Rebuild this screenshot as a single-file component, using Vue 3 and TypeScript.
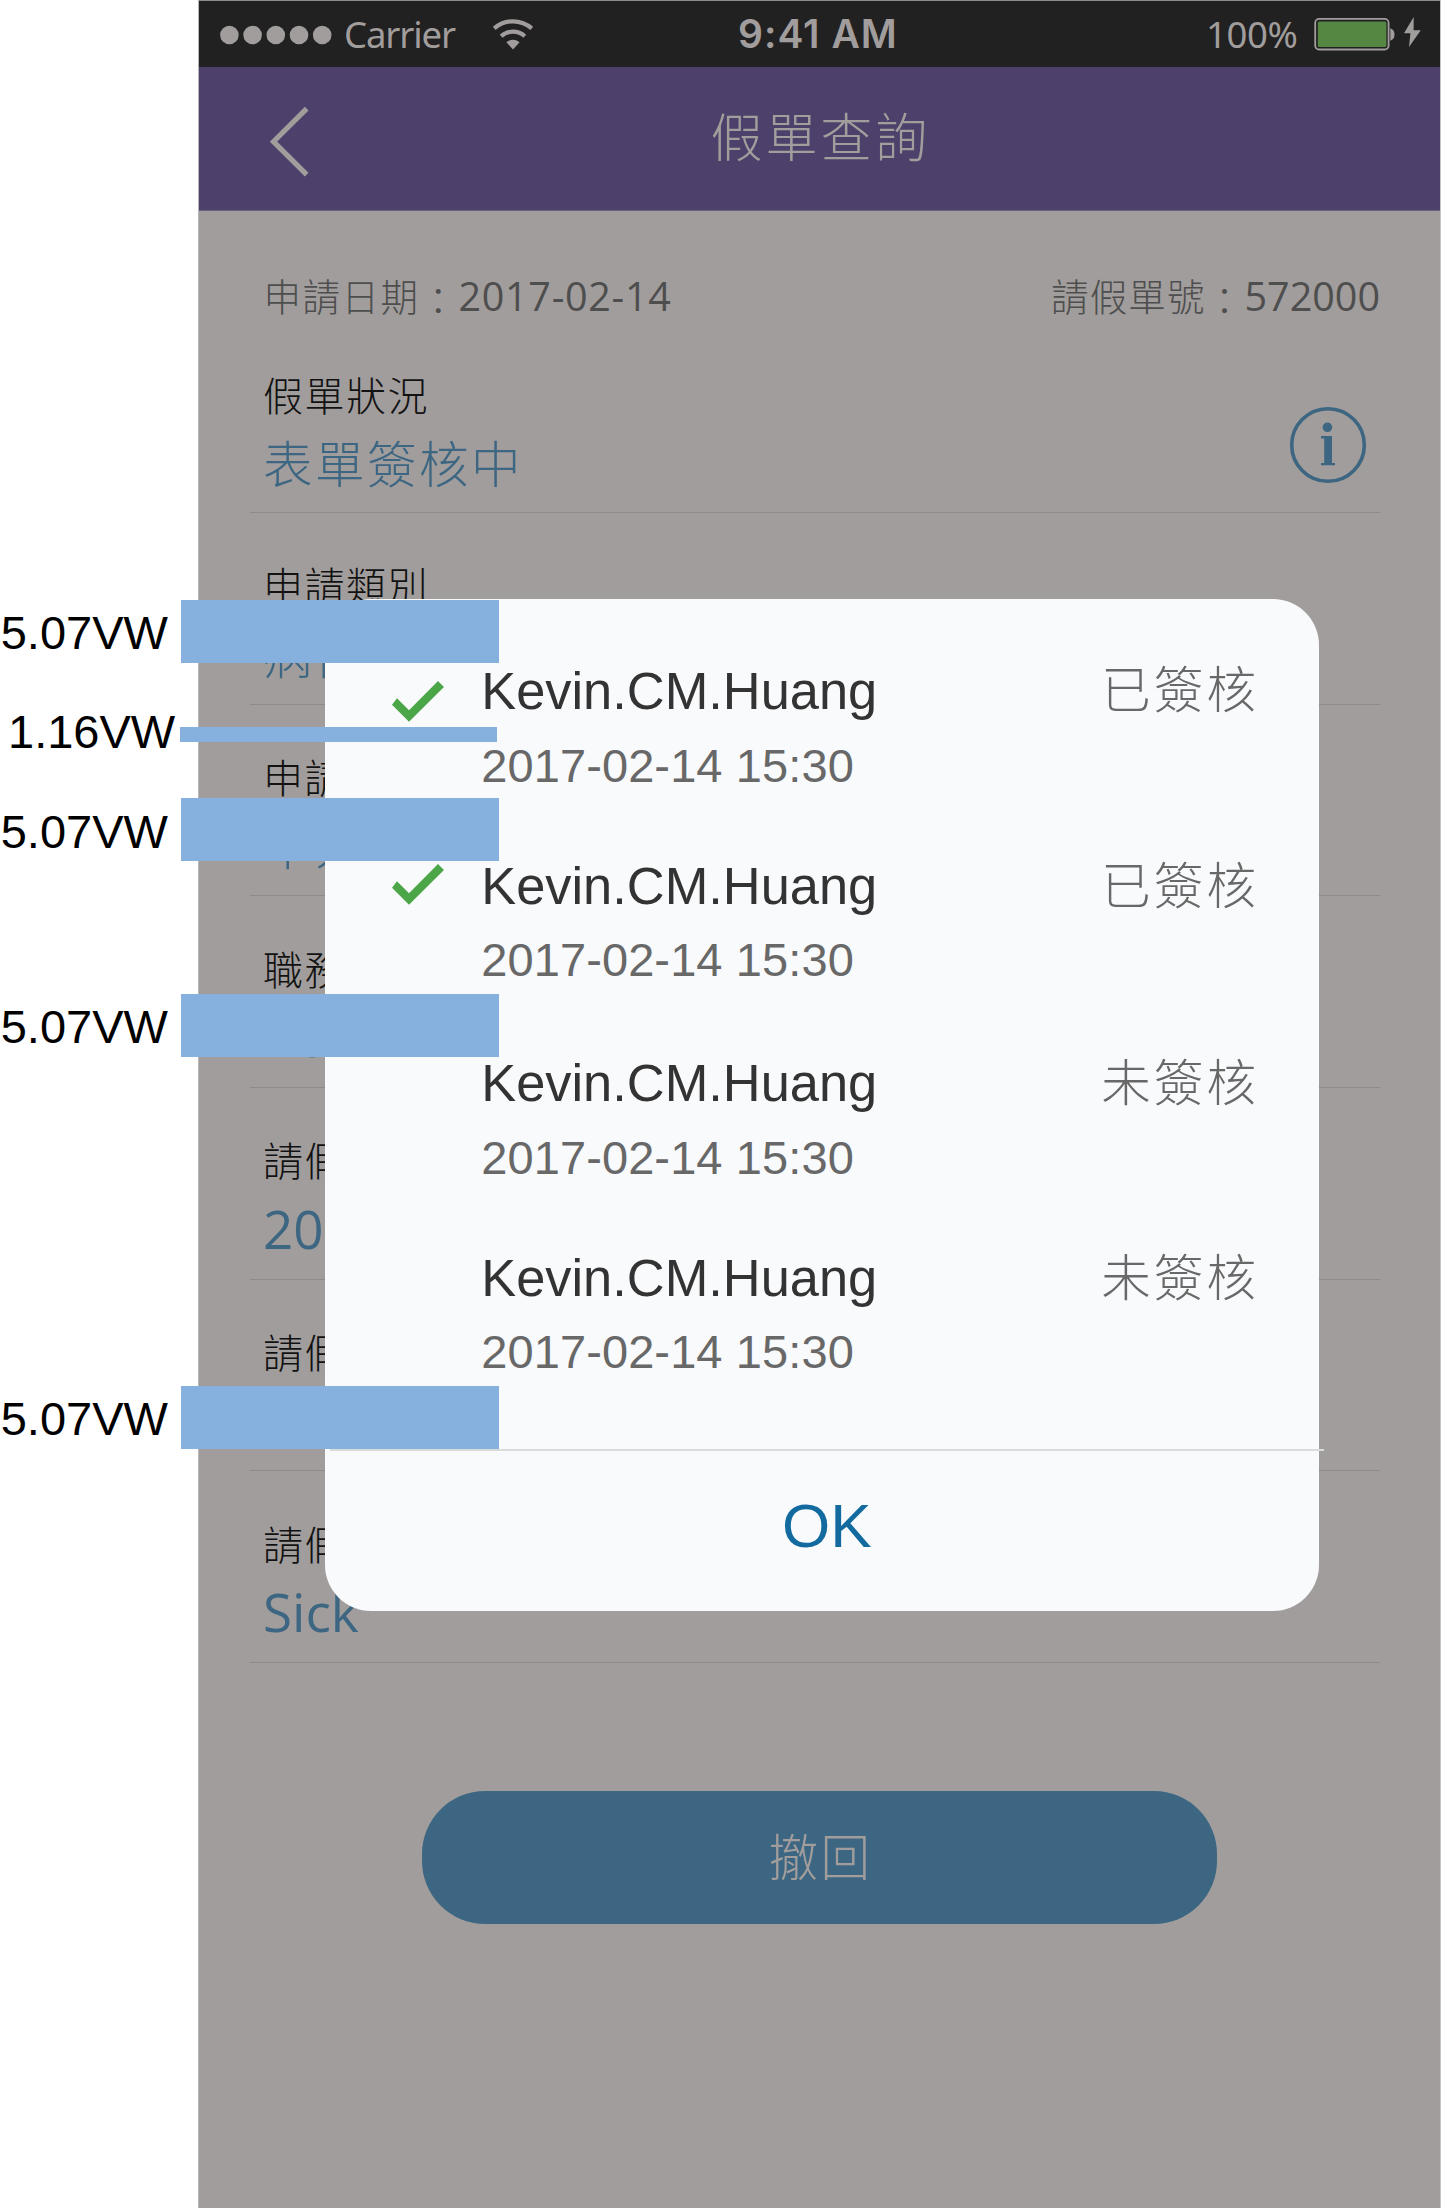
<script setup lang="ts">
interface Field {
  label: string
  value: string
  latin?: boolean
  info?: boolean
}

interface Approval {
  name: string
  time: string
  status: string
  approved: boolean
}

interface Marker {
  text: string
  kind: string
}

const fields: Field[] = [
  { label: '假單狀況', value: '表單簽核中', info: true },
  { label: '申請類別', value: '病假' },
  { label: '申請人', value: '本人' },
  { label: '職務代理人', value: 'Kevin', latin: true },
  { label: '請假時間', value: '2017', latin: true },
  { label: '請假時數', value: '' },
  { label: '請假事由', value: 'Sick', latin: true },
]

const approvals: Approval[] = [
  { name: 'Kevin.CM.Huang', time: '2017-02-14 15:30', status: '已簽核', approved: true },
  { name: 'Kevin.CM.Huang', time: '2017-02-14 15:30', status: '已簽核', approved: true },
  { name: 'Kevin.CM.Huang', time: '2017-02-14 15:30', status: '未簽核', approved: false },
  { name: 'Kevin.CM.Huang', time: '2017-02-14 15:30', status: '未簽核', approved: false },
]

const markers: Marker[] = [
  { text: '5.07VW', kind: 'm1' },
  { text: '1.16VW', kind: 'm2' },
  { text: '5.07VW', kind: 'm3' },
  { text: '5.07VW', kind: 'm4' },
  { text: '5.07VW', kind: 'm5' },
]
</script>

<template>
  <div class="board">
    <div class="phone">
      <header class="status">
        <svg class="dots" width="112" height="20" viewBox="0 0 112 20">
          <circle v-for="n in 5" :key="n" :cx="9.4 + (n - 1) * 23.2" cy="10" r="9.3" />
        </svg>
        <span class="carrier">Carrier</span>
        <svg class="wifi" width="42" height="34" viewBox="0 0 42 34">
          <path d="M2.2 11.4A28.4 28.4 0 0 1 39.8 11.4" />
          <path d="M9.2 19.2A17.6 17.6 0 0 1 32.8 19.2" />
          <path class="tip" d="M14.4 25.2Q21 20.4 27.6 25.2L21 32.4Z" />
        </svg>
        <span class="clock">9:41 AM</span>
        <span class="percent">100%</span>
        <svg class="battery" width="110" height="36" viewBox="0 0 110 36">
          <rect class="shell" x="1.2" y="2.9" width="73.4" height="30.6" rx="4" />
          <rect class="charge" x="3.8" y="5.4" width="68.6" height="25.6" rx="1.5" />
          <path d="M76.3 12.2a6 6.6 0 0 1 0 12.6Z" />
          <path d="M99.7 1L90 17.3h6.4L95 31 106.8 14.2h-7.2Z" />
        </svg>
      </header>

      <nav class="nav">
        <svg class="back" width="42" height="76" viewBox="0 0 42 76">
          <path d="M38.7 4.7L5.5 37.7 38.7 70.7" />
        </svg>
        <h1 class="title">假單查詢</h1>
      </nav>

      <div class="meta">
        <span>申請日期<i>：</i><b class="date">2017-02-14</b></span>
        <span class="number">請假單號<i>：</i><b>572000</b></span>
      </div>

      <section v-for="f in fields" :key="f.label" class="field">
        <div class="texts">
          <div class="label">{{ f.label }}</div>
          <div class="value"><span :class="{ latin: f.latin }">{{ f.value }}</span></div>
        </div>
        <svg v-if="f.info" class="info" width="78" height="78" viewBox="0 0 78 78">
          <circle class="ring" cx="39" cy="39" r="36.3" />
          <circle cx="38.4" cy="21.3" r="4.8" />
          <path d="M32 30h11v27h3v2.3H32V57h3.2V32.400H32Z" />
        </svg>
      </section>

      <button class="withdraw">撤回</button>
    </div>

    <div class="dialog">
      <div class="list">
        <div v-for="(a, i) in approvals" :key="i" class="entry">
          <svg v-if="a.approved" class="check" width="52" height="41" viewBox="0 0 52 41">
            <path d="M0 23.700L5 17.300 17 29.300 46 0 52 6 17 40.700Z" />
          </svg>
          <i v-else></i>
          <div>
            <div class="name">{{ a.name }}</div>
            <div class="time">{{ a.time }}</div>
          </div>
          <div class="state">{{ a.status }}</div>
        </div>
      </div>
      <div class="divider"></div>
      <button class="ok">OK</button>
    </div>

    <div v-for="m in markers" :key="m.kind" class="marker" :class="m.kind">
      <span>{{ m.text }}</span>
      <div class="band"></div>
    </div>
  </div>
</template>

<style>
body {
  margin: 0;
  background: #fff;
}
</style>

<style scoped>
.board {
  position: relative;
  width: 1441px;
  height: 2209px;
  overflow: hidden;
  background: #fff;
  font-family: 'Noto Sans CJK TC', sans-serif;
  font-weight: 300;
}
.phone {
  box-sizing: border-box;
  width: 1243px;
  height: 2208px;
  margin-left: 198px;
  border-left: 1px solid #b9b6b7;
  border-right: 1px solid #c6c4c4;
  background: #a19d9c;
  overflow: hidden;
}
button {
  border: 0;
  padding: 0;
  background: none;
  font: inherit;
}
.status {
  box-sizing: border-box;
  display: flex;
  height: 67px;
  border-top: 1px solid #8b8b8b;
  background: #212121;
  color: #a19d9c;
  fill: #a19d9c;
  white-space: nowrap;
}
.dots {
  margin: 23.500px 0 0 21px;
}
.carrier,
.percent {
  font: 400 36.500px/60px 'Noto Sans', sans-serif;
}
.carrier {
  width: 113px;
  margin: 3px 0 0 12px;
  letter-spacing: -1.1px;
}
.wifi {
  margin: 15.500px 0 0 35px;
  fill: none;
  stroke: #a19d9c;
  stroke-width: 4.2;
}
.wifi .tip {
  fill: #a19d9c;
  stroke: none;
}
.clock {
  width: 170px;
  margin: 3px 0 0 204px;
  font: 600 39px/60px Inter, sans-serif;
  letter-spacing: 1px;
}
.percent {
  width: 92px;
  margin: 3px 0 0 298px;
  letter-spacing: -0.4px;
}
.battery {
  margin: 15px 0 0 16.200px;
}
.shell {
  fill: none;
  stroke: #a19d9c;
  stroke-width: 1.8;
}
.charge {
  fill: #558743;
}
.nav {
  box-sizing: border-box;
  display: flex;
  height: 144px;
  border-bottom: 1px solid #6b6180;
  background: #4d406a;
  color: #a19d9c;
}
.back {
  margin: 37px 0 0 68.500px;
  fill: none;
  stroke: #a19d9c;
  stroke-width: 5.2;
}
.title {
  margin: 30px 0 0 401px;
  font-size: 52px;
  line-height: 76px;
  font-weight: inherit;
  letter-spacing: 2.9px;
}
.meta {
  display: flex;
  justify-content: space-between;
  height: 110.400px;
  box-sizing: border-box;
  padding: 59px 60px 0 64.500px;
  color: #4e4e4e;
  font-size: 37.500px;
  line-height: 50px;
  letter-spacing: 1.5px;
}
.meta .number {
  letter-spacing: 1.2px;
}
.meta i {
  position: relative;
  top: 4px;
  font-style: normal;
}
.meta b {
  font: 400 39.500px/0 'Open Sans', sans-serif;
  letter-spacing: 0;
}
.meta .date {
  letter-spacing: 0.7px;
}
.field {
  box-sizing: border-box;
  display: flex;
  justify-content: space-between;
  height: 191.670px;
  margin: 0 60px 0 51px;
  padding: 43.200px 0 0 13px;
  border-bottom: 1px solid #8f8b8a;
}
.label {
  color: #121212;
  font-size: 40px;
  line-height: 56px;
  letter-spacing: 1.5px;
}
.meta + .field .label {
  padding-top: 1.500px;
  margin-bottom: 9.500px;
}
.meta + .field .value {
  margin-top: 0;
}
.value {
  height: 60px;
  margin-top: 10.300px;
  color: #3c6681;
  font-size: 49.500px;
  line-height: 60px;
  letter-spacing: 2.5px;
}
.latin {
  font: 400 53px/0 'Open Sans', sans-serif;
  letter-spacing: 0;
}
.info {
  margin: 41px 13px 0 0;
  fill: #3c6681;
}
.ring {
  fill: none;
  stroke: #3c6681;
  stroke-width: 3.6;
}
.withdraw {
  display: block;
  width: 795px;
  height: 133px;
  margin: 128px 0 0 223px;
  padding: 0 0 5px 2px;
  border-radius: 63px;
  background: #3c6681;
  color: #a19d9c;
  font-size: 49.500px;
  letter-spacing: 2.5px;
}
.dialog {
  position: absolute;
  left: 325.400px;
  top: 599px;
  width: 993.800px;
  height: 1012px;
  border-radius: 46px;
  background: #f9fafc;
}
.list {
  display: grid;
  grid-template-rows: 194.700px 197.300px 194.700px 201px;
  padding-top: 62px;
}
.entry {
  display: grid;
  grid-template-columns: 89px 620px auto;
  align-items: start;
  padding-left: 66.800px;
}
.check {
  margin-top: 8px;
  fill: #4aa647;
}
.entry:first-child .check {
  margin-top: 20px;
}
.name {
  font: 400 52.400px/60px 'Liberation Sans', sans-serif;
  color: #333;
}
.time {
  margin-top: 17.600px;
  font: 400 47px/54px 'Liberation Sans', sans-serif;
  letter-spacing: 0.1px;
  color: #686868;
}
.state {
  padding-top: 1px;
  font-size: 49.500px;
  line-height: 52px;
  letter-spacing: 3.1px;
  color: #686868;
}
.entry:first-child .state {
  padding-top: 0;
}
.divider {
  width: 994px;
  height: 2px;
  margin-left: 4.500px;
  background: #dadcdc;
}
.ok {
  display: block;
  width: 994px;
  height: 150px;
  padding-left: 9px;
  color: #126a9f;
  font: 400 62px/150px 'Liberation Sans', sans-serif;
}
.marker {
  position: absolute;
  left: 0.700px;
  display: flex;
  align-items: center;
  height: 63.200px;
  color: #000;
  font: 400 47px/60px 'Liberation Sans', sans-serif;
}
.marker span {
  width: 180.300px;
  padding-top: 2px;
}
.band {
  width: 318.500px;
  height: 100%;
  background: #86b1df;
}
.m1 { top: 600.200px; }
.m2 { top: 727.200px; height: 15px; left: 8px; }
.m2 span { width: 172px; padding: 0 0 5px; }
.m2 .band { width: 316.500px; }
.m3 { top: 798.200px; }
.m3 span { padding-top: 5px; }
.m4 { top: 994.200px; }
.m5 { top: 1386.200px; }
</style>
